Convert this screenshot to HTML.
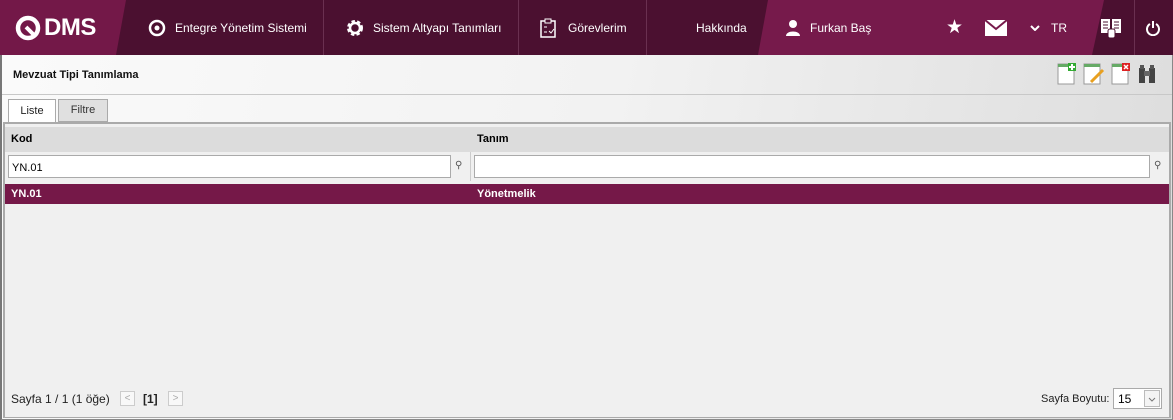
<!DOCTYPE html>
<html><head><meta charset="utf-8"><style>
*{box-sizing:border-box;margin:0;padding:0}
body{width:1173px;height:420px;overflow:hidden;font-family:"Liberation Sans",sans-serif;background:#f0f0f0;position:relative}
.hdr{position:absolute;left:0;top:0;width:1173px;height:55px;background:#4b1030;color:#fff;font-size:12px}
.hdr .it{position:absolute;top:0;height:55px;display:flex;align-items:center;white-space:nowrap}
.sep{position:absolute;top:0;width:1px;height:55px;background:#6a3050}
.abs{position:absolute;white-space:nowrap}
</style></head><body>
<div class="hdr">
 <div class="abs" style="left:0;top:0;width:126px;height:55px;background:#731848;clip-path:polygon(0 0,126px 0,116px 55px,0 55px)"></div>
 <div class="abs" style="left:15px;top:14px;font-size:24px;font-weight:bold;letter-spacing:-0.5px;display:flex;align-items:center">
  <svg width="26" height="26" viewBox="0 0 26 26"><circle cx="13" cy="13" r="10" fill="none" stroke="#fff" stroke-width="4.5"/><path d="M11 12 L20 21" stroke="#fff" stroke-width="4"/></svg><span style="margin-left:3px">DMS</span></div>
 <div class="it" style="left:148px"><svg width="18" height="18" viewBox="0 0 18 18"><circle cx="9" cy="9" r="7" fill="none" stroke="#fff" stroke-width="2.5"/><circle cx="9" cy="9" r="2.5" fill="#fff"/></svg><span style="margin-left:9px">Entegre Yönetim Sistemi</span></div>
 <div class="sep" style="left:323px"></div>
 <div class="it" style="left:345px"><svg width="20" height="20" viewBox="0 0 20 20"><circle cx="10" cy="10" r="6" fill="none" stroke="#fff" stroke-width="4" stroke-dasharray="3 2"/><circle cx="10" cy="10" r="5" fill="none" stroke="#fff" stroke-width="2.5"/></svg><span style="margin-left:8px">Sistem Altyapı Tanımları</span></div>
 <div class="sep" style="left:518px"></div>
 <div class="it" style="left:540px"><svg width="16" height="20" viewBox="0 0 16 20"><rect x="1" y="3" width="14" height="16" fill="none" stroke="#fff" stroke-width="1.5"/><rect x="5" y="1" width="6" height="4" fill="#4b1030" stroke="#fff"/><path d="M4 9h3M4 14h3M9 13l2 2 3-4" stroke="#fff" fill="none"/></svg><span style="margin-left:12px">Görevlerim</span></div>
 <div class="sep" style="left:646px"></div>
 <div class="it" style="left:696px">Hakkında</div>
 <div class="abs" style="left:758px;top:0;width:346px;height:55px;background:#761a4b;clip-path:polygon(10px 0,346px 0,334px 55px,0 55px)"></div>
 <div class="it" style="left:785px"><svg width="16" height="18" viewBox="0 0 16 18"><circle cx="8" cy="5" r="4" fill="#fff"/><path d="M1 17c0-6 14-6 14 0z" fill="#fff"/></svg><span style="margin-left:9px">Furkan Baş</span></div>
 <div class="it" style="left:946px;font-size:19px">★</div>
 <div class="it" style="left:985px"><svg width="22" height="16" viewBox="0 0 22 16"><rect width="22" height="16" fill="#fff"/><path d="M0 0l11 9 11-9" stroke="#761a4b" stroke-width="2" fill="none"/></svg></div>
 <div class="it" style="left:1030px"><svg width="10" height="6" viewBox="0 0 10 6"><path d="M1 1l4 4 4-4" stroke="#fff" stroke-width="2" fill="none"/></svg><span style="margin-left:11px">TR</span></div>
 <div class="it" style="left:1100px"><svg width="22" height="22" viewBox="0 0 22 22"><path d="M1 2h9v14H1zM12 2h9v14h-9z" fill="#fff"/><path d="M3 5h5M3 8h5M3 11h5M14 5h5M14 8h5M14 11h5" stroke="#4b1030"/><rect x="8" y="12" width="7" height="9" rx="2" fill="#fff" stroke="#4b1030"/></svg></div>
 <div class="sep" style="left:1134px"></div>
 <div class="it" style="left:1146px"><svg width="14" height="16" viewBox="0 0 14 16"><path d="M4 4a6 6 0 1 0 6 0" stroke="#fff" stroke-width="2" fill="none"/><path d="M7 1v7" stroke="#fff" stroke-width="2"/></svg></div>
</div>
<div class="abs" style="left:0;top:55px;width:1173px;height:365px;border:1px solid #888;border-top:none;border-left:2px solid #777;background:linear-gradient(100deg,#fafafa 0%,#f2f2f2 50%,#dcdcdc 100%)"></div>
<div class="abs" style="left:2px;top:94px;width:1170px;height:1px;background:#c8c8c8"></div>
<div class="abs" style="left:13px;top:69px;font-size:11px;font-weight:bold;color:#111">Mevzuat Tipi Tanımlama</div>
<div class="abs" style="left:1057px;top:62px;display:flex;gap:6px">
 <svg width="20" height="24"><rect x="1" y="2" width="16" height="20" fill="#fff" stroke="#999"/><rect x="1" y="2" width="16" height="3" fill="#6a6"/><rect x="11" y="1" width="8" height="8" fill="#3a3"/><path d="M15 2v6M12 5h6" stroke="#fff" stroke-width="2"/></svg>
 <svg width="22" height="24"><rect x="1" y="2" width="16" height="20" fill="#fff" stroke="#999"/><rect x="1" y="2" width="16" height="3" fill="#6a6"/><path d="M8 20l12-12" stroke="#e8a020" stroke-width="3"/></svg>
 <svg width="20" height="24"><rect x="1" y="2" width="16" height="20" fill="#fff" stroke="#999"/><rect x="1" y="2" width="16" height="3" fill="#6a6"/><rect x="11" y="1" width="8" height="8" fill="#d22"/><path d="M13 3l4 4M17 3l-4 4" stroke="#fff" stroke-width="1.5"/></svg>
 <svg width="20" height="24"><rect x="2" y="6" width="6" height="15" fill="#444"/><rect x="12" y="6" width="6" height="15" fill="#444"/><rect x="7" y="9" width="6" height="5" fill="#666"/><rect x="3" y="3" width="4" height="4" fill="#555"/><rect x="13" y="3" width="4" height="4" fill="#555"/></svg>
</div>
<div class="abs" style="left:8px;top:99px;width:48px;height:24px;background:#fff;border:1px solid #aaa;border-bottom:none;font-size:11px;text-align:center;line-height:22px;color:#222">Liste</div>
<div class="abs" style="left:58px;top:99px;width:50px;height:23px;background:#e0e0e0;border:1px solid #aaa;font-size:11px;text-align:center;line-height:21px;color:#333">Filtre</div>
<div class="abs" style="left:3px;top:122px;width:1168px;height:296px;background:#f0f0f0;border:2px solid #aaa;border-bottom:1px solid #aaa"></div>
<div class="abs" style="left:5px;top:127px;width:1164px;height:25px;background:#dcdcdc"></div>
<div class="abs" style="left:11px;top:133px;font-size:11px;font-weight:bold">Kod</div>
<div class="abs" style="left:477px;top:133px;font-size:11px;font-weight:bold">Tanım</div>
<div class="abs" style="left:5px;top:152px;width:1164px;height:29px;background:#f0f0f0"></div>
<div class="abs" style="left:470px;top:152px;width:1px;height:29px;background:#ccc"></div>
<div class="abs" style="left:8px;top:155px;width:443px;height:23px;background:#fff;border:1px solid #aaa;font-size:11px;padding:6px 3px">YN.01</div>
<div class="abs" style="left:455px;top:160px;font-size:10px;color:#555">⚲</div>
<div class="abs" style="left:474px;top:155px;width:676px;height:23px;background:#fff;border:1px solid #aaa"></div>
<div class="abs" style="left:1154px;top:160px;font-size:10px;color:#555">⚲</div>
<div class="abs" style="left:5px;top:184px;width:1164px;height:20px;background:#751848;color:#fff;font-size:11px;font-weight:bold"><span class="abs" style="left:6px;top:4px">YN.01</span><span class="abs" style="left:472px;top:4px">Yönetmelik</span></div>
<div class="abs" style="left:11px;top:392px;font-size:12px;color:#222">Sayfa 1 / 1 (1 öğe)</div>
<div class="abs" style="left:120px;top:391px;width:15px;height:15px;border:1px solid #ccc;background:#f8f8f8;font-size:10px;color:#aaa;text-align:center;line-height:13px">&lt;</div>
<div class="abs" style="left:143px;top:392px;font-size:12px;font-weight:bold;color:#222">[1]</div>
<div class="abs" style="left:168px;top:391px;width:15px;height:15px;border:1px solid #ccc;background:#f8f8f8;font-size:10px;color:#aaa;text-align:center;line-height:13px">&gt;</div>
<div class="abs" style="left:1041px;top:393px;font-size:11px;color:#222">Sayfa Boyutu:</div>
<div class="abs" style="left:1113px;top:388px;width:49px;height:21px;background:#fff;border:1px solid #aaa;font-size:12px;padding:3px 4px">15</div>
<div class="abs" style="left:1144px;top:390px;width:16px;height:17px;border:1px solid #bbb;background:#f4f4f4"><svg width="14" height="15"><path d="M4 7l3 3 3-3" stroke="#777" fill="none"/></svg></div>
</body></html>
